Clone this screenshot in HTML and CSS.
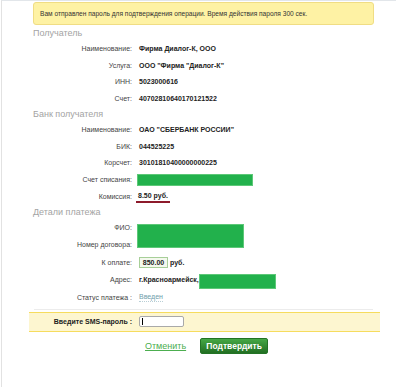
FILE: index.html
```html
<!DOCTYPE html>
<html lang="ru">
<head>
  <meta charset="UTF-8">
  <title>Подтверждение платежа</title>
  <link rel="stylesheet" href="styles.css">
</head>
<body>
<div class="page">
  <div class="notice">Вам отправлен пароль для подтверждения операции. Время действия пароля 300 сек.</div>

  <h3 class="section-title">Получатель</h3>
  <dl class="fields">
    <dt>Наименование:</dt><dd>Фирма Диалог-К, ООО</dd>
    <dt>Услуга:</dt><dd>ООО "Фирма "Диалог-К"</dd>
    <dt>ИНН:</dt><dd>5023000616</dd>
    <dt>Счет:</dt><dd>40702810640170121522</dd>
  </dl>

  <h3 class="section-title">Банк получателя</h3>
  <dl class="fields">
    <dt>Наименование:</dt><dd>ОАО "СБЕРБАНК РОССИИ"</dd>
    <dt>БИК:</dt><dd>044525225</dd>
    <dt>Корсчет:</dt><dd>30101810400000000225</dd>
    <dt>Счет списания:</dt><dd><span class="hidden-box hidden-account"></span></dd>
    <dt>Комиссия:</dt><dd><span class="fee">8.50 руб.</span></dd>
  </dl>

  <h3 class="section-title">Детали платежа</h3>
  <dl class="fields fields-wide">
    <dt>ФИО:</dt>
    <dd class="span-two"><span class="hidden-box hidden-name"></span></dd>
    <dt>Номер договора:</dt>
    <dt>К оплате:</dt><dd><span class="amount">850.00</span> руб.</dd>
    <dt>Адрес:</dt><dd>г.Красноармейск,<span class="hidden-box hidden-address"></span></dd>
    <dt>Статус платежа :</dt><dd class="status"><span>Введен</span></dd>
  </dl>

  <div class="divider"></div>

  <div class="sms-row">
    <label class="sms-label" for="sms">Введите SMS-пароль :</label>
    <div class="sms-input">
      <input type="text" id="sms">
      <span class="caret"></span>
    </div>
  </div>

  <div class="actions">
    <a href="#" class="cancel">Отменить</a>
    <button type="button" class="confirm">Подтвердить</button>
  </div>
</div>
</body>
</html>
```

FILE: styles.css
```css
* {
  margin: 0;
  padding: 0;
  box-sizing: border-box;
}

body {
  background: #fff;
  font-family: "Liberation Sans", Arial, sans-serif;
  font-size: 7px;
  color: #444;
}

.page {
  height: 387px;
  margin-left: 1px;
  border-left: 1px solid #e2e2e2;
  border-top: 1px solid #e2e6ea;
  width: 395px;
}

.notice {
  margin: 1px 0 0 31px;
  width: 341px;
  height: 23px;
  padding-left: 6px;
  display: flex;
  align-items: center;
  background: #fef2a4;
  border: 1px solid #f0dd84;
  border-radius: 3px;
  color: #333;
  font-size: 6.6px;
}

.section-title {
  margin: 1px 0 0 31px;
  height: 14px;
  line-height: 14px;
  font-size: 9px;
  font-weight: normal;
  color: #a3a3a3;
}

.fields {
  display: grid;
  grid-template-columns: 99px 1fr;
  column-gap: 7px;
  grid-auto-rows: 16.75px;
  align-items: center;
  margin-left: 31px;
  margin-bottom: -1px;
}

.fields-wide {
  grid-auto-rows: 17.4px;
}

.fields dt {
  grid-column: 1;
  text-align: right;
  color: #444;
}

.fields dd {
  grid-column: 2;
  font-weight: bold;
  color: #222;
  display: flex;
  align-items: center;
}

.span-two {
  grid-row: span 2;
}

.hidden-box {
  display: inline-block;
  background: #22b14c;
  border: 1px solid #5dc878;
}

.hidden-account {
  width: 116px;
  height: 12px;
  margin-left: -2px;
}

.hidden-name {
  width: 107px;
  height: 24px;
  margin-left: -2px;
}

.hidden-address {
  width: 77px;
  height: 15px;
  margin-top: 3px;
}

.fee {
  display: inline-block;
  line-height: 8px;
  padding: 0 2px 1px;
  margin-left: -3px;
  margin-top: 3px;
  border-bottom: 2px solid #8d1a2b;
}

.amount {
  display: inline-block;
  width: 29px;
  height: 11px;
  line-height: 9px;
  text-align: center;
  background: #f4f8ee;
  border: 1px solid #a7cf98;
  margin-right: 2px;
}

.status span {
  font-weight: normal;
  color: #6f9eab;
  border-bottom: 1px dotted #b9cfd6;
  line-height: 8px;
}

.divider {
  margin: 4px 0 0 32px;
  width: 339px;
  height: 1px;
  background: #ececec;
}

.sms-row {
  margin: 2px 0 0 27px;
  width: 351px;
  height: 20px;
  display: flex;
  align-items: center;
  gap: 7px;
  background: #fdf6d0;
  border-top: 1px solid #f6dc5e;
  border-bottom: 1px solid #f6dc5e;
}

.sms-label {
  width: 103px;
  text-align: right;
  font-weight: bold;
  color: #222;
}

.sms-input {
  position: relative;
  width: 45px;
  height: 11px;
}

.sms-input input {
  width: 100%;
  height: 100%;
  border: 1px solid #a9a9a9;
  border-radius: 2px;
  background: #fff;
  outline: none;
}

.caret {
  position: absolute;
  left: 3px;
  top: 2px;
  width: 1px;
  height: 7px;
  background: #000;
}

.actions {
  margin: 6px 0 0 143px;
  display: flex;
  align-items: center;
  gap: 14px;
}

.cancel {
  color: #4cae4f;
  font-size: 9px;
  text-decoration: underline;
}

.confirm {
  width: 68px;
  height: 16px;
  border: 1px solid #237325;
  border-radius: 2px;
  background: linear-gradient(#45a845, #226f22);
  color: #fff;
  font-family: "Liberation Sans", Arial, sans-serif;
  font-weight: bold;
  font-size: 8.5px;
  cursor: pointer;
}
```
